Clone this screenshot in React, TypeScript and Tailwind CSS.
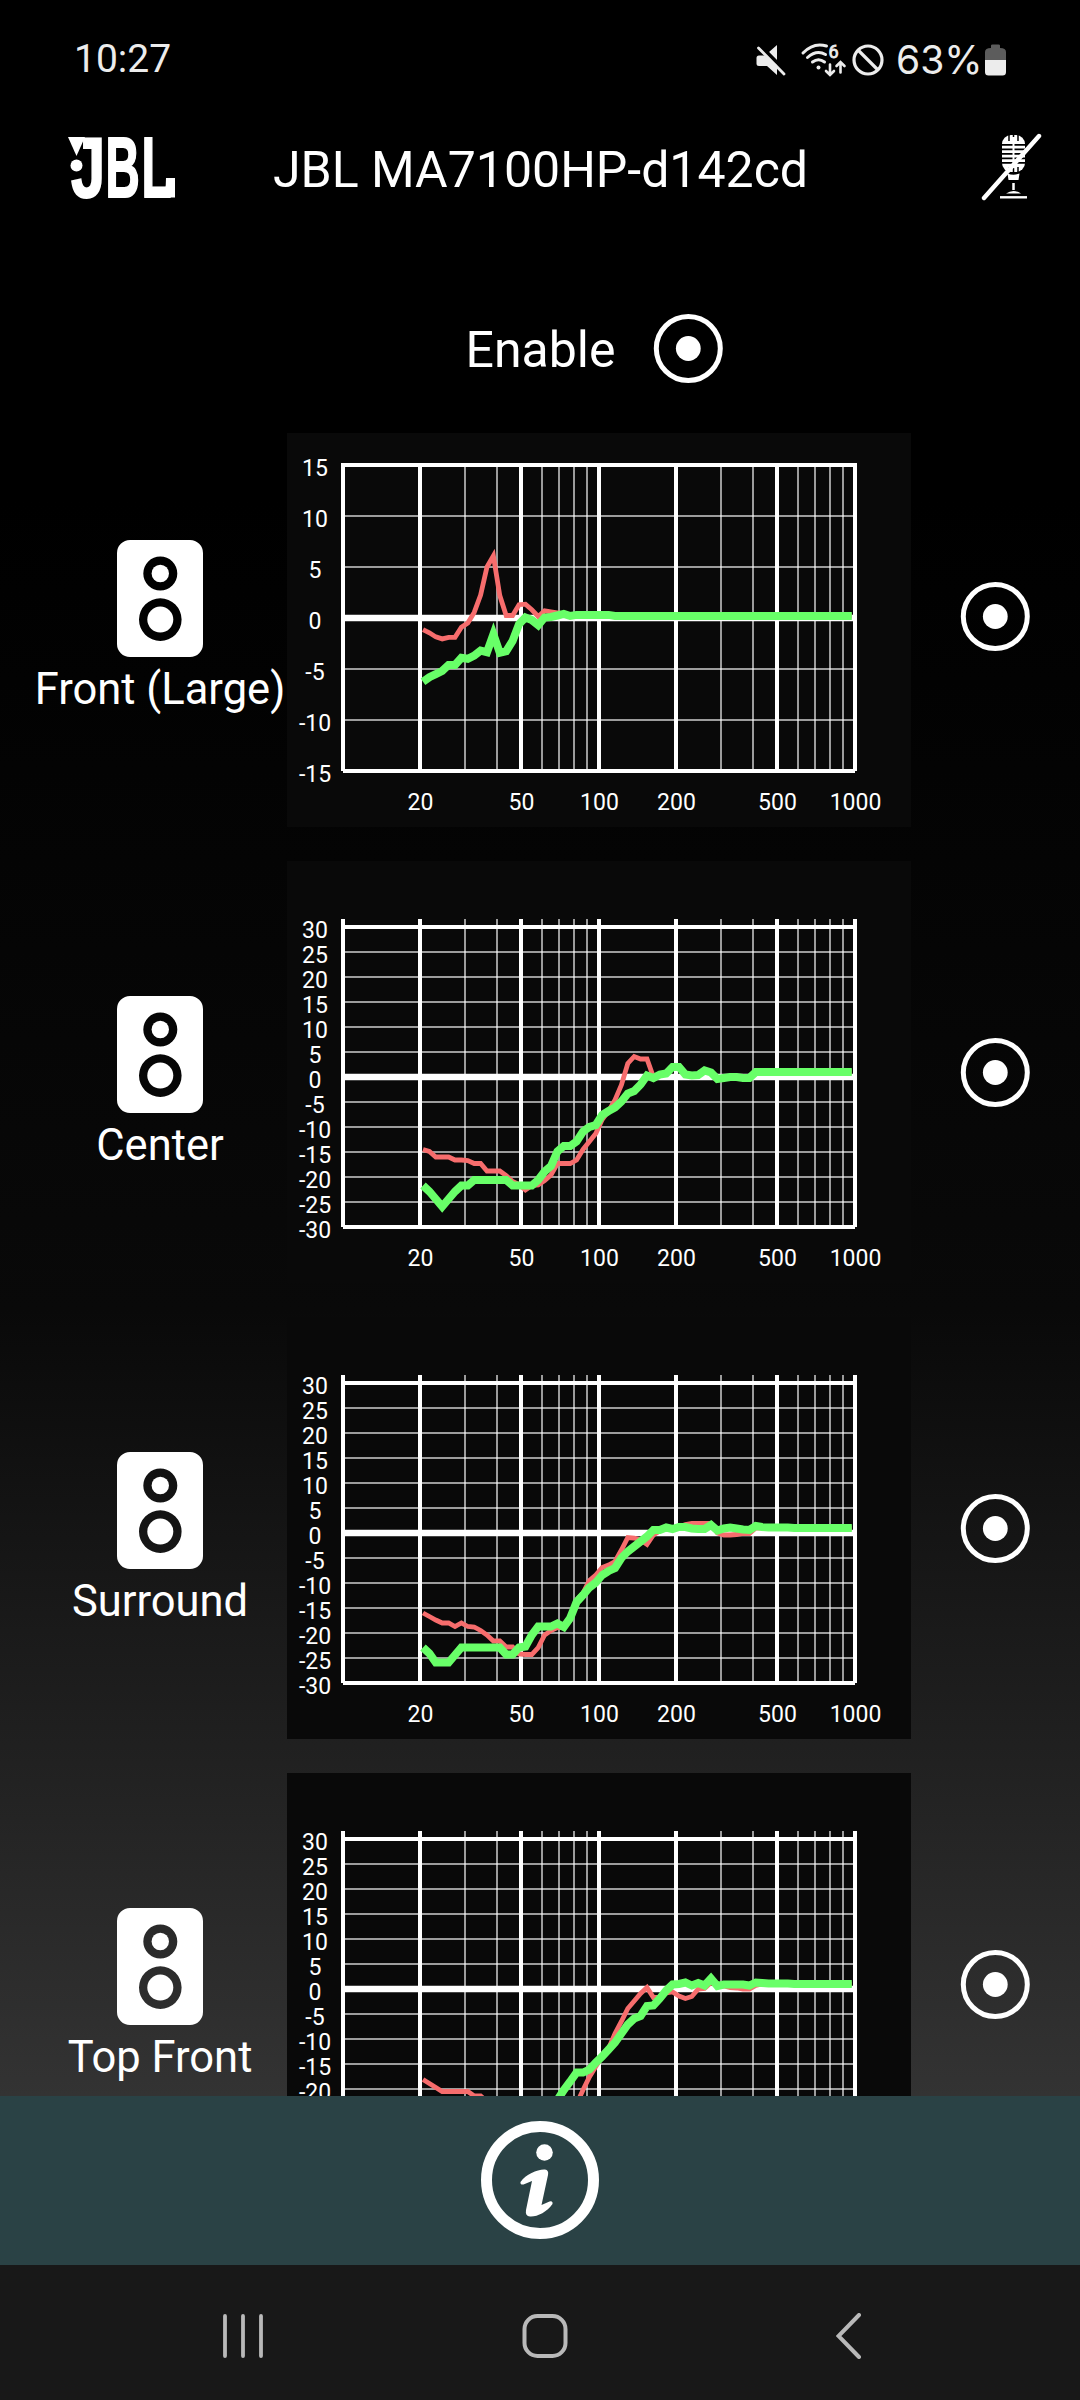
import React from 'react';

interface Channel {
  name: string;
  range: number;
  measured: number[];
  corrected: number[];
}

// Levels in dB, one value per band. The list is padded with its last value up to 1 kHz.
const BAND_COUNT = 68;

const channels: Channel[] = [
  {
    name: 'Front (Large)',
    range: 15,
    measured: [
      -1.15, -1.45, -1.85, -2.05, -1.9, -1.9, -0.9, -0.5, 0.55, 2.25, 5, 6.1, 2.2, 0.25, 0.25, 1.3, 1.35, 0.8, 0.15,
      0.7, 0.6, 0.5, 0.4, 0.2,
    ],
    corrected: [
      -6.25, -5.8, -5.5, -5.2, -4.6, -4.6, -3.9, -4, -3.7, -3.2, -3.35, -1.6, -3.4, -3.25, -2.25, -0.6, 0.05, -0.2,
      -0.7, 0.05, 0.1, 0.25, 0.4, 0.2, 0.3, 0.3, 0.3, 0.3, 0.3, 0.3, 0.2,
    ],
  },
  {
    name: 'Center',
    range: 30,
    measured: [
      -14.5, -14.9, -16, -16, -16, -16.6, -16.6, -16.7, -17.3, -17.3, -18.8, -18.8, -18.8, -19.7, -20.9, -21.5, -22.6,
      -21.7, -21.6, -20.7, -19.6, -17.3, -17.3, -17.3, -16.6, -14.5, -12.9, -11.3, -8.5, -6.8, -4.6, -1.6, 2.7, 4.1,
      3.6, 3.6, 0, 0.4, 0.7, 2, 2, 0.5, 0.3, 0.4, 1.3, 0.9, -0.4, -0.2, 0, 0, -0.2, -0.2, 1,
    ],
    corrected: [
      -21.7, -22.9, -24.4, -25.9, -24.4, -22.9, -21.7, -21.7, -20.6, -20.6, -20.6, -20.6, -20.6, -20.6, -21.7, -21.7,
      -21.7, -21.7, -20.6, -18.9, -17.8, -14.9, -13.8, -13.8, -12.9, -10.9, -10, -9.6, -7.6, -6.8, -6.1, -4.9, -3.3,
      -2.8, -1.5, 0.3, -0.2, 0.5, 0.7, 2, 2, 0.5, 0.3, 0.4, 1.3, 0.9, -0.4, -0.2, 0, 0, -0.2, -0.2, 1,
    ],
  },
  {
    name: 'Surround',
    range: 30,
    measured: [
      -16, -16.7, -17.4, -18, -18, -18.7, -18, -18.7, -18.8, -19.5, -20.4, -21.6, -21.6, -22.8, -22.8, -24.2, -24.3,
      -24.3, -22.9, -20.4, -19.5, -18.9, -18.9, -17.4, -13.4, -12, -9.5, -8.4, -6.9, -6.4, -5.7, -3.4, -0.9, -1, -1.4,
      -2.3, -0.4, 0.4, 1, 1, 1.2, 1.7, 1.9, 1.9, 1.9, 1.9, 0, -0.4, -0.4, -0.3, -0.1, -0.1, 1,
    ],
    corrected: [
      -22.9, -24.1, -25.9, -25.9, -25.9, -24.4, -22.9, -22.9, -22.9, -22.9, -22.9, -22.9, -22.9, -24.3, -24.3, -22.9,
      -22.7, -20.4, -18.7, -18.7, -18.7, -18.1, -18.8, -17, -13.8, -12.4, -10.9, -9.9, -8.4, -7.6, -7, -5, -3.7, -2.7,
      -1.7, -0.7, 0.6, 0.6, 1.1, 0.8, 1.2, 1.2, 0.9, 0.8, 0.8, 1.6, 0.5, 0.9, 1.1, 0.9, 0.7, 0.6, 1.4, 1.2, 1.1, 1.1,
      1.1, 1.1, 1,
    ],
  },
  {
    name: 'Top Front',
    range: 30,
    measured: [
      -18.1, -18.9, -19.7, -20.5, -20.5, -20.5, -20.5, -20.5, -21.4, -21.4, -22.5, -23.5, -24, -24.5, -25, -25.5, -26,
      -26, -26, -26, -25.5, -25, -24.5, -24, -23, -20.2, -17.6, -15.5, -13.5, -11.9, -8.9, -6.5, -3.9, -2.4, -0.9, 0.3,
      -1.7, -1.7, -0.8, -0.6, -1.4, -1.9, -1.5, 0, 0.1, 1.3, 0.6, 0.6, 0.3, 0.2, 0, 0, 0.7, 1,
    ],
    corrected: [
      -27, -27.5, -28, -28, -28, -27.5, -27, -27, -27, -27, -27, -27, -27, -27, -27, -26.5, -26, -25.5, -25, -24.5,
      -23.5, -22.2, -20.2, -18.5, -16.7, -16.7, -16.1, -14.7, -13.5, -12.1, -10.7, -8.9, -7.1, -5.9, -5.4, -3.4, -3.3,
      -1.9, -0.3, 0.9, 1, 1.3, 0.7, 1.2, 0.7, 2.1, 0.6, 0.9, 0.9, 0.9, 0.9, 0.7, 1.3, 1.2, 1.1, 1.1, 1.1, 1.1, 1,
    ],
  },
];

const majorFreqs = [10, 20, 50, 100, 200, 500, 1000];
const minorFreqs = [30, 40, 60, 70, 80, 90, 300, 400, 600, 700, 800, 900];

const LEFT = 56;
const RIGHT = 568;
const TOP = 58;
const BOTTOM = 366;

const freqToX = (f: number) => Math.floor(LEFT + (RIGHT - LEFT) * ((Math.log10(f) - 1) / 2) + 0.01);

const ResponseChart: React.FC<{ channel: Channel }> = ({ channel }) => {
  const { range, measured, corrected } = channel;
  const pxPerDb = range === 15 ? 10.2 : 5;
  const dbToY = (db: number) => BOTTOM - (db + range) * pxPerDb;

  const levels: number[] = [];
  for (let db = range; db >= -range; db -= 5) levels.push(db);

  const toPoints = (values: number[]) =>
    Array.from({ length: BAND_COUNT }, (_, i) => {
      const db = values[Math.min(i, values.length - 1)];
      return `${(136 + i * 6.4).toFixed(1)},${dbToY(db).toFixed(1)}`;
    }).join(' ');

  return (
    <svg className="h-[422px] w-[624px] shrink-0 bg-[#090909]" viewBox="0 0 624 422">
      {minorFreqs.map((f) => (
        <line key={f} x1={freqToX(f)} x2={freqToX(f)} y1={TOP} y2={BOTTOM} stroke="#fff" strokeOpacity={0.6} strokeWidth={2} />
      ))}
      {levels.map((db) => {
        const isEdge = Math.abs(db) === range;
        const y = dbToY(db);
        return (
          <line
            key={db}
            x1={LEFT}
            x2={RIGHT}
            y1={y}
            y2={y}
            stroke="#fff"
            strokeOpacity={isEdge || db === 0 ? 1 : 0.6}
            strokeWidth={db === 0 ? 6.6 : isEdge ? 4 : 2}
          />
        );
      })}
      {majorFreqs.map((f) => (
        <line key={f} x1={freqToX(f)} x2={freqToX(f)} y1={TOP} y2={BOTTOM} stroke="#fff" strokeWidth={4} />
      ))}
      <polyline points={toPoints(measured)} fill="none" stroke="#f76d6d" strokeWidth={4.8} />
      <polyline points={toPoints(corrected)} fill="none" stroke="#68ff68" strokeWidth={8} />
      <g fill="#fff" textAnchor="middle" className="font-['Roboto',sans-serif] text-[23px]">
        {levels.map((db) => (
          <text key={db} x={28} y={dbToY(db) + 11}>
            {db}
          </text>
        ))}
        {majorFreqs.slice(1).map((f) => (
          <text key={f} x={freqToX(f) + 0.5} y={405}>
            {f}
          </text>
        ))}
      </g>
    </svg>
  );
};

const RadioIcon: React.FC<{ className?: string }> = ({ className = '' }) => (
  <svg className={`size-[70px] ${className}`} viewBox="0 0 70 70">
    <circle cx="35.3" cy="35.5" r="32" fill="none" stroke="#fff" strokeWidth="5" />
    <circle cx="35.3" cy="35.5" r="12.4" fill="#fff" />
  </svg>
);

const SpeakerIcon = () => (
  <svg className="h-[117px] w-[86px]" viewBox="0 0 86 117" fill="#fff">
    <path
      fillRule="evenodd"
      d="M13 0H73A13 13 0 0 1 86 13V104A13 13 0 0 1 73 117H13A13 13 0 0 1 0 104V13A13 13 0 0 1 13 0Z
        M43.3 16.5a17 17 0 1 0 0 34a17 17 0 1 0 0-34Z
        M43.3 58.3a21.3 21.3 0 1 0 0 42.6a21.3 21.3 0 1 0 0-42.6Z"
    />
    <circle cx="43.3" cy="33.5" r="8.7" />
    <circle cx="43.3" cy="79.6" r="13" />
  </svg>
);

const JblLogo = () => (
  <svg
    className="h-[64px] w-[108px] overflow-visible font-['Liberation_Sans',Arial,sans-serif] text-[88px] font-bold"
    viewBox="0 0 108 64"
    fill="#fff"
    stroke="#fff"
    strokeWidth="2"
  >
    <path d="M0 2H17L8.5 21Z" stroke="none" />
    <circle cx="8.5" cy="30.5" r="6" stroke="none" />
    <text transform="translate(3 61.5) scale(.7 .97)">J</text>
    <text transform="translate(37.5 61.5) scale(.54 .97)">B</text>
    <text transform="translate(73.5 61.5) scale(.56 .97)">L</text>
    <path d="M98 43H107V62.5H94Q98 58 98 43Z" stroke="none" />
  </svg>
);

const MicOffIcon = () => (
  <svg className="h-[68px] w-[62px]" viewBox="0 0 62 68">
    <rect x="21" y="2" width="23" height="37" rx="9" fill="#fff" />
    <path d="M20 11.8H45M20 16.3H45M20 20.8H45M20 25.3H45M20 29.8H45" stroke="#000" strokeWidth="1.8" />
    <path d="M28 1V8M32.5 1V4M37 1V8M28 34V40M32.5 35V40M37 34V40" stroke="#000" strokeWidth="1.5" />
    <path d="M32.5 5V34" stroke="#fff" strokeWidth="2" />
    <path d="M26.5 40.5Q32.5 43 38.5 40.5L37.5 47H27.5Z" fill="#fff" />
    <path d="M32.5 50V57" stroke="#fff" strokeWidth="2.5" />
    <path d="M25 60.5Q32.5 55.5 40 60.5Z" fill="#fff" />
    <path d="M19 64.3H46" stroke="#fff" strokeWidth="2.4" />
    <path d="M3 65L58 3" stroke="#fff" strokeWidth="4.4" strokeLinecap="round" />
  </svg>
);

const StatusBar = () => (
  <div className="flex h-[116px] items-center justify-between pt-[3px] pr-[74px] pl-[74px] text-[39px] text-[#ececec]">
    <span>10:27</span>
    <div className="flex items-center">
      {/* muted */}
      <svg className="mr-[14px] h-8 w-[31px]" viewBox="0 0 31 32" fill="#ececec">
        <path d="M3 11.5H8.5L21 21V31L11 22H3Q.5 22 .5 19.5V14Q.5 11.5 3 11.5ZM13 8L21 1V16Z" />
        <path d="M5 2L30 28" stroke="#000" strokeWidth="3" />
        <path d="M2.5 4L28 30" stroke="#ececec" strokeWidth="2.8" strokeLinecap="round" />
      </svg>
      {/* wi-fi 6 */}
      <svg
        className="mr-[6px] h-[34px] w-[45px] overflow-visible"
        viewBox="0 0 45 34"
        fill="none"
        stroke="#ececec"
        strokeWidth="3"
        strokeLinecap="round"
      >
        <path d="M2 10Q12.5 -1 25.5 3M6.5 14.5Q15.5 6.5 24.5 11.5M11.5 19Q17.5 14.5 23.5 19" />
        <circle cx="17.5" cy="24.5" r="2" fill="#ececec" stroke="none" />
        <path d="M29 21.5V31.5M25 28L29 32L33 28M39.5 29.5V19.5M35.5 23L39.5 19L43.5 23" strokeWidth="2.6" />
        <text x="27.5" y="15" fill="#ececec" strokeWidth=".8" className="text-[18px]">
          6
        </text>
      </svg>
      {/* blocked */}
      <svg className="mr-[12px] size-8" viewBox="0 0 32 32" fill="none" stroke="#ececec" strokeWidth="3.2">
        <circle cx="16" cy="16" r="14" />
        <path d="M6 6L26 26" />
      </svg>
      <span className="w-[84px] font-['Inter',sans-serif] text-[39px] leading-[46px] whitespace-nowrap">63%</span>
      <svg className="ml-[5px] h-8 w-[21px]" viewBox="0 0 21 32">
        <path d="M6 4V1.5Q6 .5 7.5 .5H13.5Q15 .5 15 1.5V4Q21 4 21 8V16H0V8Q0 4 6 4Z" fill="#5c5c5c" />
        <path d="M0 16H21V28Q21 31.5 17.5 31.5H3.5Q0 31.5 0 28Z" fill="#ececec" />
      </svg>
    </div>
  </div>
);

const NavBar = () => (
  <div className="flex h-[135px] items-center justify-between bg-[#181818] pr-[218px] pl-[222px]">
    <svg className="mt-[7px] h-[46px] w-[42px]" viewBox="0 0 42 46" stroke="#b9b9b9" strokeWidth="3.8" strokeLinecap="round">
      <path d="M3 3V43M21 3V43M39 3V43" />
    </svg>
    <svg className="mt-[7px] mr-[11px] size-[46px]" viewBox="0 0 46 46" fill="none" stroke="#b9b9b9" strokeWidth="4">
      <rect x="2.5" y="3" width="41" height="40" rx="13" />
    </svg>
    <svg className="mt-[7px] h-[46px] w-[26px]" viewBox="0 0 26 46" fill="none" stroke="#b9b9b9" strokeWidth="4" strokeLinecap="round">
      <path d="M23 2L2.5 23L23 44" />
    </svg>
  </div>
);

export default function App() {
  return (
    <div className="flex h-[2400px] w-[1080px] flex-col overflow-hidden bg-[linear-gradient(#000_0,#000_500px,#040404_860px,#090909_1310px,#202020_1745px,#333_2096px)] font-['Roboto',sans-serif] text-white">
      <StatusBar />

      <header className="flex h-[102px] items-center pr-[37px] pl-[68px]">
        <JblLogo />
        <h1 className="flex-1 pt-[6px] pr-[76px] text-center text-[50px] whitespace-nowrap">JBL MA7100HP-d142cd</h1>
        <MicOffIcon />
      </header>

      <div className="flex h-[215px] items-start justify-center pt-[95px] pl-[109px]">
        <span className="pt-px text-[50px] leading-[72px]">Enable</span>
        <RadioIcon className="ml-[38px]" />
      </div>

      <main className="min-h-0 flex-1 overflow-hidden">
        <div className="-mt-7 flex flex-col gap-[34px]">
          {channels.map((channel) => (
            <div key={channel.name} className="flex h-[422px]">
              <div className="flex w-[287px] flex-col items-center pt-[135px] pl-[33px]">
                <SpeakerIcon />
                <span className="mt-[7px] text-[43.5px] leading-[52px] whitespace-nowrap">{channel.name}</span>
              </div>
              <ResponseChart channel={channel} />
              <div className="flex flex-1 items-center justify-center pr-px">
                <RadioIcon />
              </div>
            </div>
          ))}
        </div>
      </main>

      <footer className="flex h-[169px] items-center justify-center bg-[#2a4245] pb-px">
        <svg className="size-[118px]" viewBox="0 0 118 118">
          <circle cx="59" cy="59" r="53.5" fill="none" stroke="#fff" strokeWidth="11" />
          <circle cx="63.5" cy="31.5" r="8.3" fill="#fff" />
          <path
            d="M39.5 61C45 53 57 48 64 48.5Q68 49 67 54L60.5 84L68.5 80.5Q72 79.5 71.5 83C66 91 56 96 49 95.5Q44 95 45 89L51 60L42.5 63.5Q39 64 39.5 61Z"
            fill="#fff"
          />
        </svg>
      </footer>
      <NavBar />
    </div>
  );
}
